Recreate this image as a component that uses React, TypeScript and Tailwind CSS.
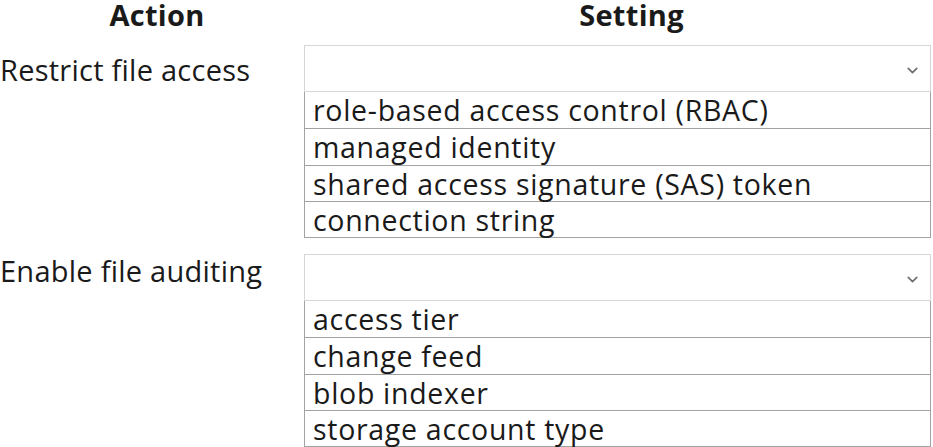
import React from 'react';
import { ChevronDown } from 'lucide-react';

// Action / Setting answer area with two open drop-down lists

interface SettingRowProps {
  label: string;
  options: string[];
  labelClassName: string;
}

const SettingRow: React.FC<SettingRowProps> = ({ label, options, labelClassName }) => {
  return (
    <div className="flex">
      <div
        className={`w-[304px] shrink-0 text-[29px] leading-[36px] tracking-[0.25px] whitespace-nowrap ${labelClassName}`}
      >
        {label}
      </div>
      <div className="w-[627px] shrink-0">
        {/* Closed select header */}
        <div className="h-[47px] border border-[#d6d6d6] flex items-center justify-end pr-[9px]">
          <ChevronDown size={17} strokeWidth={2.4} className="text-[#707070] mt-[3px]" />
        </div>
        {/* Option list */}
        <div className="border border-t-0 border-[#a3a3a3]">
          {options.map((option, i) => (
            <div
              key={option}
              className={`h-[36.25px] pl-[8px] text-[28.5px] leading-[36px] tracking-[0.7px] whitespace-nowrap ${
                i > 0 ? 'border-t border-[#a3a3a3]' : ''
              }`}
            >
              {option}
            </div>
          ))}
        </div>
      </div>
    </div>
  );
};

export default function App() {
  return (
    <div className="w-[933px] h-[447px] bg-white overflow-hidden font-['Open_Sans',sans-serif] text-[#1a1a1a]">
      <div className="flex h-[45px] items-start font-bold text-[29px] leading-[29px] tracking-[0.3px]">
        <div className="w-[304px] text-center pl-[10px]">Action</div>
        <div className="flex-1 text-center pl-[26px]">Setting</div>
      </div>

      <SettingRow
        label="Restrict file access"
        labelClassName="pt-[6.5px]"
        options={[
          'role-based access control (RBAC)',
          'managed identity',
          'shared access signature (SAS) token',
          'connection string',
        ]}
      />

      <div className="h-[16px]" />

      <SettingRow
        label="Enable file auditing"
        labelClassName="-mt-[1.5px]"
        options={['access tier', 'change feed', 'blob indexer', 'storage account type']}
      />
    </div>
  );
}
